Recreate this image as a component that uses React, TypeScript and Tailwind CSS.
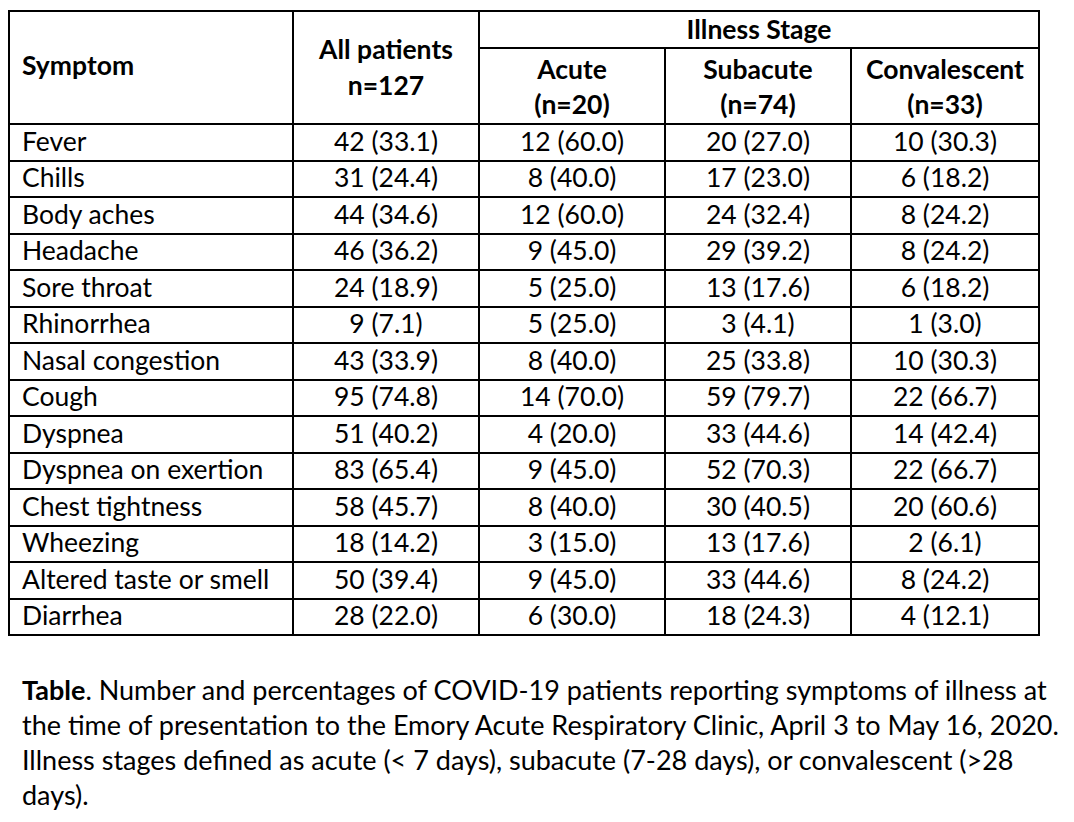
import React from "react";

const rows: string[][] = [
  ["Fever", "42 (33.1)", "12 (60.0)", "20 (27.0)", "10 (30.3)"],
  ["Chills", "31 (24.4)", "8 (40.0)", "17 (23.0)", "6 (18.2)"],
  ["Body aches", "44 (34.6)", "12 (60.0)", "24 (32.4)", "8 (24.2)"],
  ["Headache", "46 (36.2)", "9 (45.0)", "29 (39.2)", "8 (24.2)"],
  ["Sore throat", "24 (18.9)", "5 (25.0)", "13 (17.6)", "6 (18.2)"],
  ["Rhinorrhea", "9 (7.1)", "5 (25.0)", "3 (4.1)", "1 (3.0)"],
  ["Nasal congestion", "43 (33.9)", "8 (40.0)", "25 (33.8)", "10 (30.3)"],
  ["Cough", "95 (74.8)", "14 (70.0)", "59 (79.7)", "22 (66.7)"],
  ["Dyspnea", "51 (40.2)", "4 (20.0)", "33 (44.6)", "14 (42.4)"],
  ["Dyspnea on exertion", "83 (65.4)", "9 (45.0)", "52 (70.3)", "22 (66.7)"],
  ["Chest tightness", "58 (45.7)", "8 (40.0)", "30 (40.5)", "20 (60.6)"],
  ["Wheezing", "18 (14.2)", "3 (15.0)", "13 (17.6)", "2 (6.1)"],
  ["Altered taste or smell", "50 (39.4)", "9 (45.0)", "33 (44.6)", "8 (24.2)"],
  ["Diarrhea", "28 (22.0)", "6 (30.0)", "18 (24.3)", "4 (12.1)"],
];

const cell = "border-2 border-black p-0";

export default function App() {
  return (
    <div className="w-[1074px] h-[822px] bg-white text-black font-['Lato',sans-serif]">
      <div className="pt-[10px] pl-[8px]">
        <table className="border-collapse table-fixed w-[1030px] text-[26.5px]">
          <colgroup>
            <col className="w-[284px]" />
            <col className="w-[186px]" />
            <col className="w-[186px]" />
            <col className="w-[186px]" />
            <col className="w-[188px]" />
          </colgroup>
          <thead className="font-bold">
            <tr className="h-[37px]">
              <th rowSpan={2} className={`${cell} text-left pl-[12px] align-middle pb-[4px]`}>
                Symptom
              </th>
              <th rowSpan={2} className={`${cell} text-center leading-[36px] pb-[2px]`}>
                All patients
                <br />
                n=127
              </th>
              <th colSpan={3} className={`${cell} text-center leading-[32px] pb-[2px]`}>
                Illness Stage
              </th>
            </tr>
            <tr className="h-[76px]">
              <th className={`${cell} text-center leading-[35px] pt-[2px]`}>
                Acute
                <br />
                (n=20)
              </th>
              <th className={`${cell} text-center leading-[35px] pt-[2px]`}>
                Subacute
                <br />
                (n=74)
              </th>
              <th className={`${cell} text-center leading-[35px] pt-[2px]`}>
                Convalescent
                <br />
                (n=33)
              </th>
            </tr>
          </thead>
          <tbody>
            {rows.map((r) => (
              <tr key={r[0]} className="h-[36.5px]">
                <td className={`${cell} pl-[12px] leading-[31px] pb-[2px]`}>{r[0]}</td>
                {r.slice(1).map((v, i) => (
                  <td key={i} className={`${cell} text-center leading-[31px] pb-[2px]`}>
                    {v}
                  </td>
                ))}
              </tr>
            ))}
          </tbody>
        </table>
      </div>
      <div className="mt-[36px] pl-[22px] text-[27px] leading-[35px] whitespace-nowrap">
        <div>
          <span className="font-bold">Table</span>. Number and percentages of COVID-19 patients reporting symptoms of illness at
        </div>
        <div>the time of presentation to the Emory Acute Respiratory Clinic, April 3 to May 16, 2020.</div>
        <div>Illness stages defined as acute (&lt; 7 days), subacute (7-28 days), or convalescent (&gt;28</div>
        <div>days).</div>
      </div>
    </div>
  );
}
